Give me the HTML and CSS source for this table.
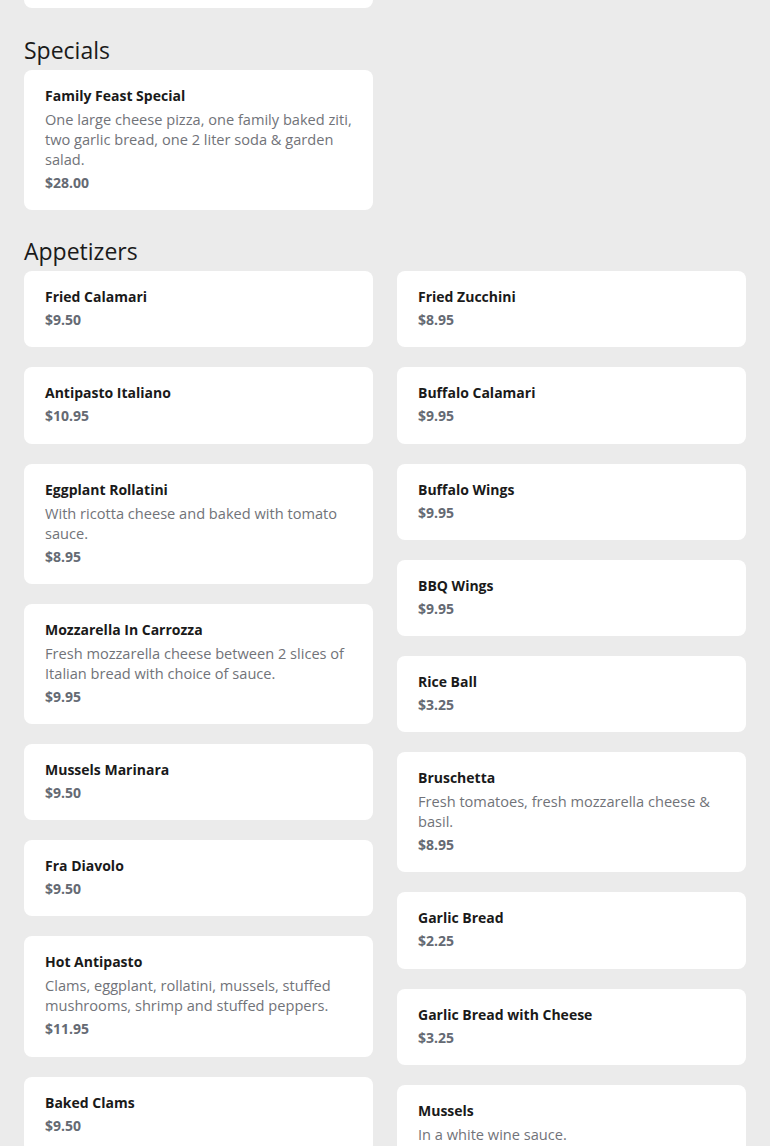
FILE: index.html
```html
<!DOCTYPE html>
<html lang="en">
<head>
<meta charset="utf-8">
<title>Menu</title>
<link rel="stylesheet" href="styles.css">
</head>
<body>
<main class="menu">
  <div class="cut-card"></div>

  <section class="section">
    <h2 class="section-title">Specials</h2>
    <div class="grid">
      <div class="col">
        <div class="card">
          <div class="name">Family Feast Special</div>
          <div class="desc">One large cheese pizza, one family baked ziti, two garlic bread, one 2 liter soda &amp; garden salad.</div>
          <div class="price">$28.00</div>
        </div>
      </div>
      <div class="col"></div>
    </div>
  </section>

  <section class="section">
    <h2 class="section-title">Appetizers</h2>
    <div class="grid">
      <div class="col">
        <div class="card"><div class="name">Fried Calamari</div><div class="price">$9.50</div></div>
        <div class="card"><div class="name">Antipasto Italiano</div><div class="price">$10.95</div></div>
        <div class="card"><div class="name">Eggplant Rollatini</div><div class="desc">With ricotta cheese and baked with tomato sauce.</div><div class="price">$8.95</div></div>
        <div class="card"><div class="name">Mozzarella In Carrozza</div><div class="desc">Fresh mozzarella cheese between 2 slices of Italian bread with choice of sauce.</div><div class="price">$9.95</div></div>
        <div class="card"><div class="name">Mussels Marinara</div><div class="price">$9.50</div></div>
        <div class="card"><div class="name">Fra Diavolo</div><div class="price">$9.50</div></div>
        <div class="card"><div class="name">Hot Antipasto</div><div class="desc">Clams, eggplant, rollatini, mussels, stuffed mushrooms, shrimp and stuffed peppers.</div><div class="price">$11.95</div></div>
        <div class="card"><div class="name">Baked Clams</div><div class="price">$9.50</div></div>
      </div>
      <div class="col">
        <div class="card"><div class="name">Fried Zucchini</div><div class="price">$8.95</div></div>
        <div class="card"><div class="name">Buffalo Calamari</div><div class="price">$9.95</div></div>
        <div class="card"><div class="name">Buffalo Wings</div><div class="price">$9.95</div></div>
        <div class="card"><div class="name">BBQ Wings</div><div class="price">$9.95</div></div>
        <div class="card"><div class="name">Rice Ball</div><div class="price">$3.25</div></div>
        <div class="card"><div class="name">Bruschetta</div><div class="desc">Fresh tomatoes, fresh mozzarella cheese &amp; basil.</div><div class="price">$8.95</div></div>
        <div class="card"><div class="name">Garlic Bread</div><div class="price">$2.25</div></div>
        <div class="card"><div class="name">Garlic Bread with Cheese</div><div class="price">$3.25</div></div>
        <div class="card"><div class="name">Mussels</div><div class="desc">In a white wine sauce.</div><div class="price">$8.95</div></div>
      </div>
    </div>
  </section>
</main>
</body>
</html>
```
FILE: styles.css
```css
html, body {
  margin: 0;
  padding: 0;
  background: #ebebeb;
}
body {
  font-family: "Open Sans", "Liberation Sans", sans-serif;
  color: #1a1a1a;
}
.menu {
  padding: 0 24px 24px;
  display: flex;
  flex-direction: column;
}
.cut-card {
  width: 349px;
  height: 8px;
  background: #fff;
  border-radius: 0 0 8px 8px;
}
.section {
  margin-top: 28px;
}
.section + .section {
  margin-top: 27px;
}
.section-title {
  margin: 0 0 6px;
  font-size: 23px;
  font-weight: 400;
  line-height: 28px;
  color: #1a1a1a;
}
.grid {
  display: grid;
  grid-template-columns: 1fr 1fr;
  column-gap: 24px;
  align-items: start;
}
.col {
  display: flex;
  flex-direction: column;
  gap: 20px;
}
.card {
  background: #fff;
  border-radius: 8px;
  padding: 16px 21px 17.2px;
  display: flex;
  flex-direction: column;
  gap: 3px;
}
.name {
  font-size: 14px;
  font-weight: 700;
  line-height: 20px;
  color: #1a1a1a;
}
.desc {
  margin-bottom: 1px;
  font-size: 14.6px;
  line-height: 20px;
  color: #717379;
}
.price {
  font-size: 14px;
  font-weight: 700;
  line-height: 20px;
  color: #656a73;
}
```
